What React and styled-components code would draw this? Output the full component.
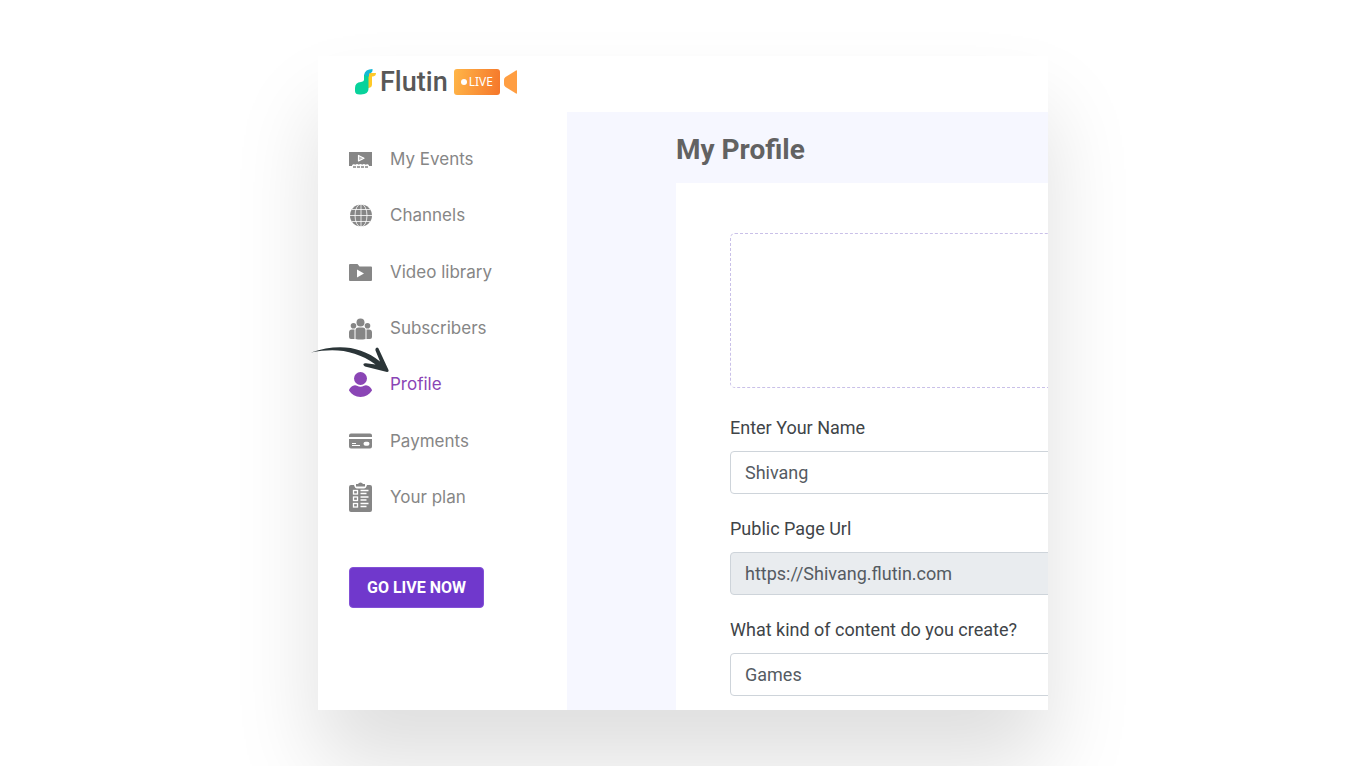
import React, { useState } from 'react';
import styled, { createGlobalStyle } from 'styled-components';

const navItems = [
    { name: 'My Events', icon: 'events' },
    { name: 'Channels', icon: 'globe' },
    { name: 'Video library', icon: 'library' },
    { name: 'Subscribers', icon: 'people' },
    { name: 'Profile', icon: 'profile' },
    { name: 'Payments', icon: 'card' },
    { name: 'Your plan', icon: 'plan' },
];

const icons = {
    events: (
        <>
            <path fill="currentColor" d="M0 9h23v14H0z" />
            <path fill="#fff" d="M3 22.500a2 1.500 0 0 1 3.400-.8 2 1.500 0 0 1 3.400 0 2 1.500 0 0 1 3.400 0 2 1.500 0 0 1 3.400 0 2 1.500 0 0 1 3.400.8V25H3z" />
            <path fill="none" stroke="currentColor" strokeWidth="1.500" strokeDasharray="3 1" d="M4 24h16" />
            <path fill="#bbb" stroke="#fff" strokeWidth="1.200" strokeLinejoin="round" d="M9.500 12.500v5.500l5.500-2.700z" />
        </>
    ),
    globe: (
        <>
            <circle cx="12" cy="16.500" r="11" fill="currentColor" />
            <g fill="none" stroke="#fff" strokeWidth=".8">
                <path d="M12 5v23M1 16.500h22M3 10.500h18M3 22.500h18" />
                <ellipse cx="12" cy="16.500" rx="6" ry="11.500" />
            </g>
        </>
    ),
    library: (
        <>
            <path fill="currentColor" d="M1 8h7.500l2 2.500H22a1 1 0 0 1 1 1V24a1 1 0 0 1-1 1H1a1 1 0 0 1-1-1V9a1 1 0 0 1 1-1z" />
            <path fill="#fff" d="M8 13.500v8l7-4z" />
        </>
    ),
    people: (
        <g fill="currentColor">
            <circle cx="11.500" cy="10.500" r="4" />
            <circle cx="4.500" cy="13.800" r="2.800" />
            <circle cx="18.500" cy="13.800" r="2.800" />
            <path d="M6.500 27V18.500q0-3 3-3h4q3 0 3 3V27q-5 1.200-10 0z" />
            <path d="M5.500 27H2q-2 0-2-2v-4.500q0-3 3-3h2.500zM17.500 27H21q2 0 2-2v-4.500q0-3-3-3h-2.500z" />
        </g>
    ),
    profile: (
        <g fill="currentColor">
            <circle cx="11.500" cy="10.500" r="6.500" />
            <path d="M3.500 18c2-1.300 3.500-.9 4.500-.3 2.400 1.300 4.600 1.300 7 0 1-.6 2.500-1 4.500.3 2.200 1.400 3.300 2.900 3.500 4.500-2.700 4.300-6.500 6.500-11.500 6.500S2.700 26.800 0 22.500c.2-1.600 1.300-3.100 3.500-4.500z" />
        </g>
    ),
    card: (
        <>
            <path fill="currentColor" d="M2 8.500h19a2 2 0 0 1 2 2V12H0v-1.500a2 2 0 0 1 2-2zM0 14h23v7.500a2 2 0 0 1-2 2H2a2 2 0 0 1-2-2z" />
            <path stroke="#fff" strokeWidth="1" d="M3 18.500h4M3 20.500h8" />
            <rect x="14.500" y="16.800" width="6" height="4" rx="2" fill="#fff" />
        </>
    ),
    plan: (
        <>
            <path fill="currentColor" d="M2 4h3q1 3.500 3 3.500h7q2 0 3-3.500h3a2 2 0 0 1 2 2v23a2 2 0 0 1-2 2H2a2 2 0 0 1-2-2V6a2 2 0 0 1 2-2z" />
            <path fill="currentColor" d="M7 3h2q.7-1.500 2.500-1.500T14 3h2v2.500H7z" />
            <g fill="none" stroke="#fff" strokeWidth="1.300">
                <rect x="4.500" y="9.500" width="4" height="3.500" />
                <rect x="4.500" y="16" width="4" height="3.500" />
                <rect x="4.500" y="22.500" width="4" height="3.500" />
                <path d="M11.500 9.500h8M11.500 12.500h6M11.500 16h8M11.500 19h6M11.500 22.500h8M11.500 25.500h6" />
            </g>
        </>
    ),
};

const App = () => {
    const [active, setActive] = useState('Profile');
    const [name, setName] = useState('Shivang');
    const [content, setContent] = useState('Games');

    return (
        <>
            <GlobalStyle />
            <Page>
                <Window>
                    <Header>
                        <NoteIcon viewBox="0 0 21 26" aria-hidden="true">
                            <path fill="#ffc928" d="M12 4h9q0 3-3 3.500h-1v8q0 3-3.500 3.500H12z" />
                            <path fill="#14b8d4" d="M9 6Q10 0 17.500 0v1.500q-.3 2.500-3.500 3v3L9 8z" />
                            <path fill="#08d29b" d="M9 6q1.500 1 4.500 1V20q0 5-7.500 5.500-6 .5-6-3.500v-3q0-5.500 6-6 3-.3 3-2z" />
                        </NoteIcon>
                        <Brand>Flutin</Brand>
                        <LiveBadge><LiveDot />LIVE</LiveBadge>
                        <Lens viewBox="0 0 13 24" aria-hidden="true">
                            <path fill="#ff9e42" d="M13 1v22q0 1-1 .5L1.500 17Q0 16 0 14v-4q0-2 1.500-3L12 .5q1-.5 1 .5z" />
                        </Lens>
                    </Header>
                    <Body>
                        <Sidebar>
                            <Nav>
                                {navItems.map((item) => (
                                    <NavLink
                                        href="#"
                                        key={item.name}
                                        $active={item.name === active}
                                        onClick={() => setActive(item.name)}
                                    >
                                        <NavIcon viewBox="0 0 24 32" aria-hidden="true">{icons[item.icon]}</NavIcon>
                                        {item.name}
                                    </NavLink>
                                ))}
                            </Nav>
                            <LiveButton type="button">GO LIVE NOW</LiveButton>
                        </Sidebar>
                        <Main>
                            <Title>My Profile</Title>
                            <Card>
                                <DropZone />
                                <Field>
                                    <Label htmlFor="name">Enter Your Name</Label>
                                    <Input id="name" value={name} onChange={(e) => setName(e.target.value)} />
                                </Field>
                                <Field>
                                    <Label htmlFor="url">Public Page Url</Label>
                                    <Input id="url" value="https://Shivang.flutin.com" readOnly />
                                </Field>
                                <Field>
                                    <Label htmlFor="content">What kind of content do you create?</Label>
                                    <Select id="content" value={content} onChange={(e) => setContent(e.target.value)}>
                                        <option>Games</option>
                                    </Select>
                                </Field>
                            </Card>
                        </Main>
                    </Body>
                    <Pointer viewBox="0 0 78 28" aria-hidden="true">
                        <path fill="#2b3538" d="M0 6.500C25-2 49-1 69 15.500L64.500 4.500q-.5-2.500 1.500-3 1.500 0 2 2L77.500 24q.5 2-1.500 2L54 20.500q-2-1-1.500-2.500.5-1 2.500-.8l9.500 1.300C45 4 24 1.500 0 6.500z" />
                    </Pointer>
                </Window>
            </Page>
        </>
    );
};

const GlobalStyle = createGlobalStyle`
  * {
    box-sizing: border-box;
  }

  body {
    margin: 0;
    background: #fff;
    font-family: Roboto, sans-serif;
  }
`;

const Page = styled.div`
  display: flex;
  justify-content: center;
  min-height: 100vh;
  padding: 56px 24px;
`;

const Window = styled.div`
  position: relative;
  display: flex;
  flex-direction: column;
  width: 100%;
  max-width: 730px;
  background: #fff;
  box-shadow: 0 54px 80px rgba(0, 0, 0, 0.13);
`;

const Header = styled.header`
  display: flex;
  align-items: center;
  height: 56px;
  padding: 0 37px 4px;
`;

const NoteIcon = styled.svg`
  width: 21px;
  height: 26px;
`;

const Brand = styled.span`
  margin: 0 6px 0 4px;
  color: #585858;
  font-size: 27px;
  font-weight: 500;
  line-height: 32px;
`;

const LiveBadge = styled.span`
  display: flex;
  align-items: center;
  gap: 2px;
  height: 26px;
  padding: 0 7px;
  border-radius: 3px;
  background: linear-gradient(100deg, #ffb648, #f5762a);
  color: #fff;
  font-family: 'Noto Sans', sans-serif;
  font-size: 12px;
  line-height: 24px;
`;

const LiveDot = styled.i`
  width: 6px;
  height: 6px;
  border-radius: 50%;
  background: #fff;
`;

const Lens = styled.svg`
  width: 13px;
  height: 24px;
  margin-left: 4px;
`;

const Body = styled.div`
  display: flex;
  flex: 1;
`;

const Sidebar = styled.aside`
  flex: 0 0 249px;
  padding: 19px 31px;
`;

const Nav = styled.nav`
  display: flex;
  flex-direction: column;
  justify-content: space-between;
  min-height: 394px;
  margin-bottom: 42px;
`;

const NavLink = styled.a`
  display: flex;
  align-items: center;
  gap: 17px;
  height: 56px;
  color: ${(props) => (props.$active ? '#8a45b5' : '#868686')};
  font-family: Inter, sans-serif;
  font-size: 17px;
  text-decoration: none;
`;

const NavIcon = styled.svg`
  width: 24px;
  height: 32px;
`;

const LiveButton = styled.button`
  height: 41px;
  padding: 0 17px;
  border: 1px solid #8250d6;
  border-radius: 4px;
  background: #7038cc;
  color: #fff;
  font-family: Roboto, sans-serif;
  font-size: 16px;
  font-weight: 700;
`;

const Main = styled.main`
  display: flex;
  flex: 1;
  flex-direction: column;
  min-width: 0;
  padding-left: 109px;
  overflow: hidden;
  background: #f6f7ff;
`;

const Title = styled.h1`
  margin: 0;
  padding: 20px 0 15px;
  color: #626262;
  font-size: 28px;
  font-weight: 700;
  line-height: 36px;
`;

/* the form keeps its own width and runs under the window's edge */
const Card = styled.form`
  flex: 1;
  width: 640px;
  padding: 50px 54px 12px;
  background: #fff;
`;

const DropZone = styled.div`
  height: 155px;
  margin-bottom: 28px;
  border: 1px dashed #c9c0e8;
  border-radius: 5px;
`;

const Field = styled.div`
  display: flex;
  flex-direction: column;
  gap: 11px;

  & + & {
    margin-top: 23px;
  }
`;

const Label = styled.label`
  color: #404448;
  font-size: 18px;
  line-height: 24px;
`;

const Input = styled.input`
  width: 100%;
  height: 43px;
  padding: 0 14px 1px;
  border: 1px solid #ced4da;
  border-radius: 4px;
  background: #fff;
  color: #555b62;
  font-family: Roboto, sans-serif;
  font-size: 18px;

  &:read-only {
    background: #e9ecef;
  }
`;

const Select = styled.select`
  width: 100%;
  height: 43px;
  padding: 0 14px 1px;
  border: 1px solid #ced4da;
  border-radius: 4px;
  appearance: none;
  background: #fff;
  color: #555b62;
  font-family: Roboto, sans-serif;
  font-size: 18px;
`;

const Pointer = styled.svg`
  position: absolute;
  top: 290px;
  left: -7px;
  width: 78px;
  height: 28px;
`;

export default App;
